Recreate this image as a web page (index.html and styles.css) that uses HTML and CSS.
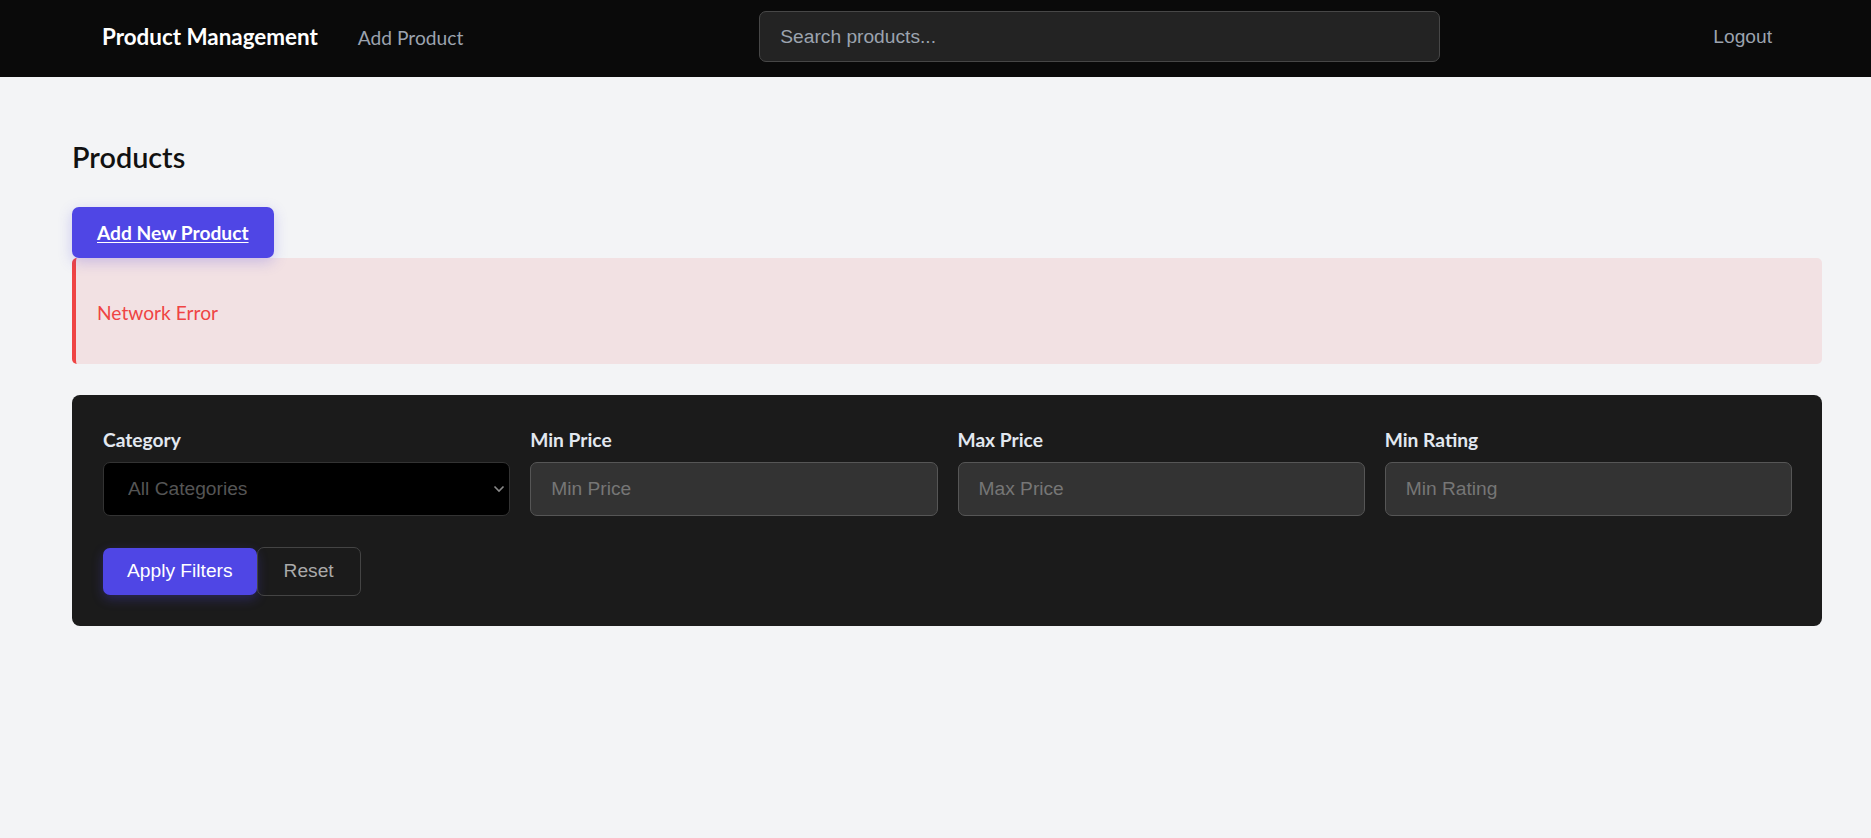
FILE: index.html
```html
<!DOCTYPE html>
<html lang="en">
<head>
<meta charset="utf-8">
<title>Product Management</title>
<link rel="stylesheet" href="styles.css">
</head>
<body>
<header class="topbar">
  <div class="nav-left">
    <a class="brand" href="#">Product Management</a>
    <a class="nav-link" href="#">Add Product</a>
  </div>
  <input class="search" type="text" placeholder="Search products...">
  <button class="logout" type="button">Logout</button>
</header>
<main class="page">
  <h1 class="title">Products</h1>
  <a class="add-btn" href="#">Add New Product</a>
  <div class="error">Network Error</div>
  <section class="filters">
    <div class="filter-grid">
      <div class="field">
        <label class="label">Category</label>
        <div class="select-wrap">
          <select class="select">
            <option>All Categories</option>
          </select>
          <svg class="chevron" width="12" height="8" viewBox="0 0 12 8"><path d="M1.5 1.5 L6 6 L10.5 1.5" fill="none" stroke="#8a8a8a" stroke-width="1.6"/></svg>
        </div>
      </div>
      <div class="field">
        <label class="label">Min Price</label>
        <input class="input" type="text" placeholder="Min Price">
      </div>
      <div class="field">
        <label class="label">Max Price</label>
        <input class="input" type="text" placeholder="Max Price">
      </div>
      <div class="field">
        <label class="label">Min Rating</label>
        <input class="input" type="text" placeholder="Min Rating">
      </div>
    </div>
    <div class="actions">
      <button class="apply" type="button">Apply Filters</button>
      <button class="reset" type="button">Reset</button>
    </div>
  </section>
</main>
</body>
</html>
```
FILE: styles.css
```css
* { box-sizing: border-box; }
html, body { margin: 0; padding: 0; }
body {
  background: #f3f4f6;
  font-family: Lato, "Noto Sans", sans-serif;
  color: #111;
  min-height: 838px;
}
.topbar {
  height: 77px;
  background: #0a0a0a;
  display: flex;
  align-items: center;
  padding: 0 99px 4px 102px;
}
.nav-left {
  display: flex;
  align-items: baseline;
  gap: 40px;
}
.brand {
  color: #fff;
  font-weight: 700;
  font-size: 22.4px;
  text-decoration: none;
}
.nav-link {
  color: #9ca3af;
  font-size: 19.2px;
  text-decoration: none;
}
.search {
  margin-left: 296px;
  width: 681px;
  height: 51px;
  background: #232323;
  border: 1px solid #474747;
  border-radius: 7px;
  padding: 0 20px;
  font-family: "Liberation Sans", Arial, sans-serif;
  font-size: 19.2px;
  color: #ddd;
  outline: none;
}
.search::placeholder { color: #9ca3af; }
.logout {
  margin-left: auto;
  background: transparent;
  border: none;
  padding: 0;
  color: #9ca3af;
  font-family: "Liberation Sans", Arial, sans-serif;
  font-size: 19.2px;
}
.page {
  padding: 63px 49px 0 72px;
}
.title {
  margin: 0 0 32px;
  font-size: 28.8px;
  font-weight: 600;
  line-height: 1.2;
  color: #111;
}
.add-btn {
  display: inline-block;
  background: #4f46e5;
  color: #fff;
  font-weight: 700;
  font-size: 19.2px;
  line-height: 23px;
  padding: 14px 25px;
  border-radius: 7px;
  text-decoration: underline;
  text-underline-offset: 2px;
  box-shadow: 0 4px 14px rgba(79, 70, 229, 0.25);
  position: relative;
  z-index: 1;
}
.error {
  background: #f2e1e3;
  border-left: 4px solid #ef4444;
  border-radius: 5px;
  color: #ef4444;
  font-size: 19.2px;
  line-height: 23px;
  padding: 43px 20px 40px 21px;
  margin-bottom: 31px;
}
.filters {
  background: #1b1b1b;
  border-radius: 8px;
  padding: 33px 30px 30px 31px;
}
.filter-grid {
  display: grid;
  grid-template-columns: repeat(4, 1fr);
  gap: 20px;
}
.field {
  display: flex;
  flex-direction: column;
}
.label {
  color: #e2e8f0;
  font-weight: 700;
  font-size: 19.2px;
  line-height: 23px;
  margin-bottom: 11px;
}
.select-wrap {
  position: relative;
}
.select {
  width: 100%;
  height: 54px;
  appearance: none;
  -webkit-appearance: none;
  background: #000;
  border: 1px solid #333;
  border-radius: 7px;
  color: #555;
  padding: 0 24px;
  font-family: "Liberation Sans", Arial, sans-serif;
  font-size: 19.2px;
  outline: none;
}
.chevron {
  position: absolute;
  right: 5px;
  top: 23px;
}
.input {
  width: 100%;
  height: 54px;
  background: #333;
  border: 1px solid #565656;
  border-radius: 7px;
  color: #ddd;
  padding: 0 20px;
  font-family: "Liberation Sans", Arial, sans-serif;
  font-size: 19.2px;
  outline: none;
}
.input::placeholder { color: #767676; }
.actions {
  display: flex;
  align-items: center;
  margin-top: 31px;
}
.apply {
  height: 47px;
  padding: 0 24px;
  background: #4f46e5;
  color: #fff;
  border: none;
  border-radius: 7px;
  font-family: "Liberation Sans", Arial, sans-serif;
  font-size: 19.2px;
  box-shadow: 0 4px 12px rgba(79, 70, 229, 0.3);
}
.reset {
  height: 49px;
  padding: 0 26px;
  background: transparent;
  color: #aaa;
  border: 1px solid #444;
  border-radius: 7px;
  font-family: "Liberation Sans", Arial, sans-serif;
  font-size: 19.2px;
}
```
